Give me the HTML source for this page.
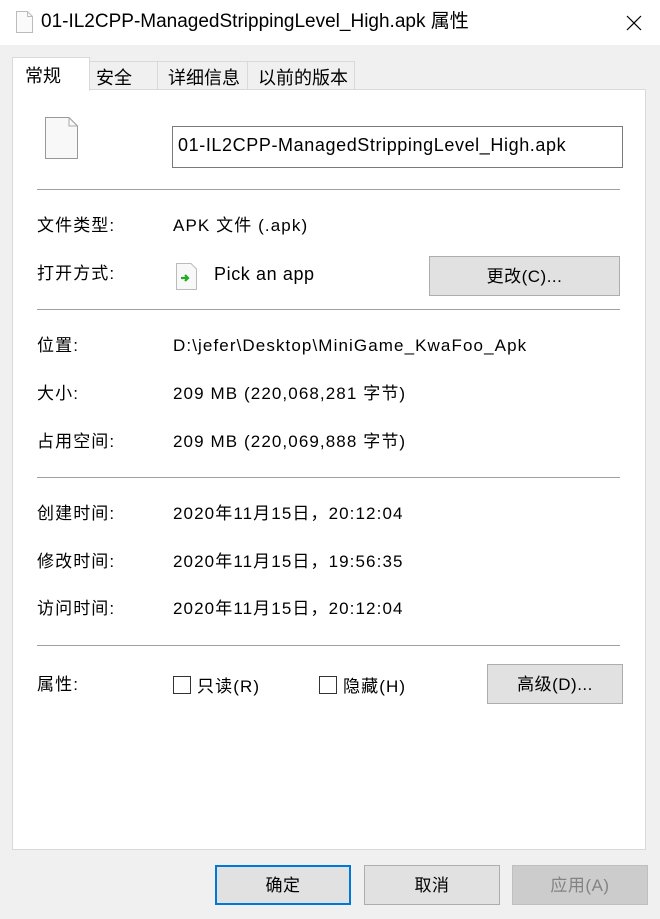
<!DOCTYPE html>
<html><head><meta charset="utf-8"><style>
body{margin:0;width:660px;height:919px;background:#f0f0f0;font-family:"Liberation Sans","Noto Sans CJK SC",sans-serif;color:#000;position:relative;overflow:hidden}
.a{position:absolute;white-space:nowrap}
.t{font-size:17px;line-height:20px;letter-spacing:1.1px}
.sep{position:absolute;left:37px;width:583px;height:1px;background:#a0a0a0}
.btn{position:absolute;background:#e1e1e1;border:1px solid #adadad;box-sizing:border-box;font-size:17px;line-height:20px;display:flex;align-items:center;justify-content:center;padding-top:2px;letter-spacing:0.5px}
.cb{position:absolute;width:18px;height:18px;border:1px solid #333;box-sizing:border-box;background:#fff}
</style></head><body>
<div class="a" style="left:0;top:0;width:660px;height:45px;background:#fff"></div>
<svg class="a" style="left:16px;top:11px" width="17" height="22"><path d="M0.5 0.5H11.5L16.5 5.5V21.5H0.5Z" fill="#fafafa" stroke="#bbb"/><path d="M11.5 0.5V5.5H16.5" fill="none" stroke="#bbb"/></svg>
<div class="a" style="left:41px;top:10px;font-size:19px;line-height:24px">01-IL2CPP-ManagedStrippingLevel_High.apk 属性</div>
<svg class="a" style="left:626px;top:15px" width="16" height="16"><path d="M1 1L15 15M15 1L1 15" stroke="#000" stroke-width="1.2"/></svg>
<div class="a" style="left:12px;top:89px;width:634px;height:761px;background:#fff;border:1px solid #d9d9d9;box-sizing:border-box"></div>
<div class="a" style="left:89px;top:61px;width:69px;height:29px;border:1px solid #d9d9d9;border-bottom:none;box-sizing:border-box"></div>
<div class="a" style="left:158px;top:61px;width:90px;height:29px;border:1px solid #d9d9d9;border-bottom:none;border-left:none;box-sizing:border-box"></div>
<div class="a" style="left:248px;top:61px;width:107px;height:29px;border:1px solid #d9d9d9;border-bottom:none;border-left:none;box-sizing:border-box"></div>
<div class="a" style="left:12px;top:57px;width:78px;height:34px;background:#fff;border:1px solid #d9d9d9;border-bottom:none;box-sizing:border-box"></div>
<div class="a t" style="left:25px;top:66px;font-size:18px;letter-spacing:0">常规</div>
<div class="a t" style="left:96px;top:68px;font-size:18px;letter-spacing:0">安全</div>
<div class="a t" style="left:168px;top:68px;font-size:18px;letter-spacing:0">详细信息</div>
<div class="a t" style="left:258px;top:68px;font-size:18px;letter-spacing:0">以前的版本</div>
<svg class="a" style="left:45px;top:117px" width="33" height="42"><path d="M0.5 0.5H24L32.5 9V41.5H0.5Z" fill="#f8f8f8" stroke="#999"/><path d="M24 0.5V9H32.5" fill="none" stroke="#aaa"/></svg>
<div class="a" style="left:172px;top:126px;width:451px;height:42px;border:1px solid #7a7a7a;box-sizing:border-box;background:#fff"></div>
<div class="a t" style="left:178px;top:135px;font-size:18px;letter-spacing:0.6px">01-IL2CPP-ManagedStrippingLevel_High.apk</div>
<div class="sep" style="top:189px"></div>
<div class="a t" style="left:37px;top:216px">文件类型:</div>
<div class="a t" style="left:173px;top:216px">APK 文件 (.apk)</div>
<div class="a t" style="left:37px;top:264px">打开方式:</div>
<svg class="a" style="left:176px;top:263px" width="21" height="27"><path d="M0.5 0.5H15L20.5 6V26.5H0.5Z" fill="#f8f8f8" stroke="#bbb"/><path d="M5 15H12M9 12L12 15L9 18" stroke="#2a2" stroke-width="2.2" fill="none"/></svg>
<div class="a t" style="left:214px;top:264px;font-size:18px;letter-spacing:0.6px">Pick an app</div>
<div class="btn" style="left:429px;top:256px;width:191px;height:40px">更改(C)...</div>
<div class="sep" style="top:309px"></div>
<div class="a t" style="left:37px;top:336px">位置:</div>
<div class="a t" style="left:173px;top:336px">D:\jefer\Desktop\MiniGame_KwaFoo_Apk</div>
<div class="a t" style="left:37px;top:384px">大小:</div>
<div class="a t" style="left:173px;top:384px">209 MB (220,068,281 字节)</div>
<div class="a t" style="left:37px;top:432px">占用空间:</div>
<div class="a t" style="left:173px;top:432px">209 MB (220,069,888 字节)</div>
<div class="sep" style="top:477px"></div>
<div class="a t" style="left:37px;top:504px">创建时间:</div>
<div class="a t" style="left:173px;top:504px">2020年11月15日，20:12:04</div>
<div class="a t" style="left:37px;top:552px">修改时间:</div>
<div class="a t" style="left:173px;top:552px">2020年11月15日，19:56:35</div>
<div class="a t" style="left:37px;top:599px">访问时间:</div>
<div class="a t" style="left:173px;top:599px">2020年11月15日，20:12:04</div>
<div class="sep" style="top:645px"></div>
<div class="a t" style="left:37px;top:675px">属性:</div>
<div class="cb" style="left:173px;top:676px"></div>
<div class="a t" style="left:197px;top:677px">只读(R)</div>
<div class="cb" style="left:319px;top:676px"></div>
<div class="a t" style="left:343px;top:677px">隐藏(H)</div>
<div class="btn" style="left:487px;top:664px;width:136px;height:40px">高级(D)...</div>
<div class="btn" style="left:215px;top:865px;width:136px;height:40px;border:2px solid #0078d7">确定</div>
<div class="btn" style="left:364px;top:865px;width:136px;height:40px">取消</div>
<div class="btn" style="left:512px;top:865px;width:136px;height:40px;background:#cccccc;border-color:#bfbfbf;color:#838383">应用(A)</div>
</body></html>
